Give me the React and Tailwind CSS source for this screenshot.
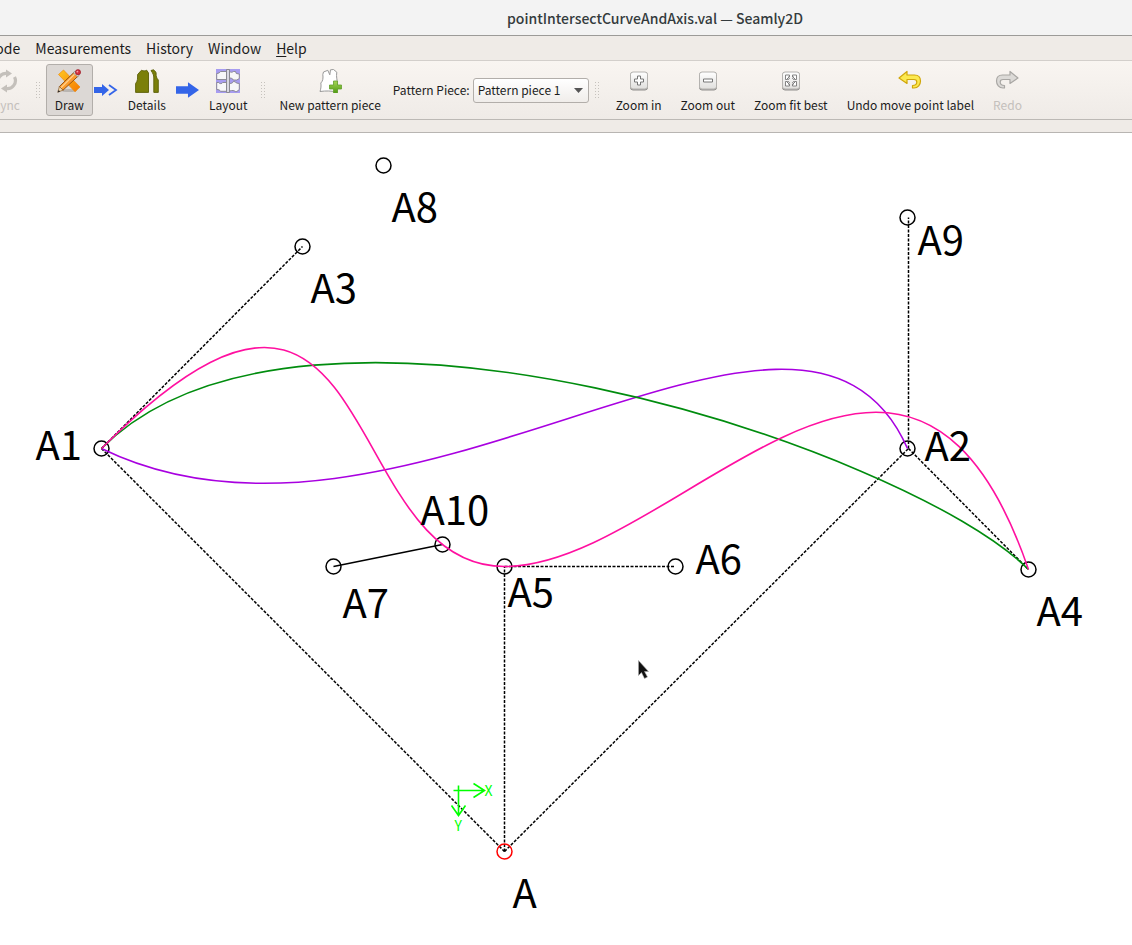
const menus = ['Mode', 'Measurements', 'History', 'Window'];

const lines = [
  [101, 448, 302, 246],
  [101, 448, 504, 851],
  [504, 851, 908, 448],
  [504, 851, 504, 566],
  [504, 566, 675, 566],
  [908, 448, 908, 217],
  [908, 448, 1028, 569],
];

const points = [
  { name: 'A', x: 504, y: 851, lx: 512, ly: 907 },
  { name: 'A1', x: 101, y: 448, lx: 35, ly: 459 },
  { name: 'A2', x: 907, y: 448, lx: 924, ly: 460 },
  { name: 'A3', x: 302, y: 246, lx: 310, ly: 302 },
  { name: 'A4', x: 1028, y: 569, lx: 1036, ly: 625 },
  { name: 'A5', x: 504, y: 566, lx: 507, ly: 606 },
  { name: 'A6', x: 675, y: 566, lx: 695, ly: 573 },
  { name: 'A7', x: 333, y: 566, lx: 342, ly: 617 },
  { name: 'A8', x: 383, y: 165, lx: 391, ly: 221 },
  { name: 'A9', x: 907, y: 217, lx: 917, ly: 254 },
  { name: 'A10', x: 442, y: 544, lx: 420, ly: 524 },
];

function SyncIcon() {
  return (
    <svg className="size-6" viewBox="0 0 24 24" fill="none" stroke="#c4c0bb" strokeWidth="3.200">
      <path d="M4.800 16A8 8 0 0 1 13 4.500M20.500 8A8 8 0 0 1 12 19.500" />
      <path d="M12 .5v8l6-4zM13 15.500v8l-6-4z" fill="#c4c0bb" stroke="none" />
    </svg>
  );
}

function DrawIcon() {
  return (
    <svg className="size-6" viewBox="0 0 24 24">
      <defs>
        <linearGradient id="ruler" x1="0" y1="0" x2="1" y2="1">
          <stop offset="0" stopColor="#ffc71f" />
          <stop offset="1" stopColor="#f57900" />
        </linearGradient>
      </defs>
      <ellipse cx="12" cy="21.500" rx="8" ry="1.600" fill="#b9b5b1" />
      <path d="M1.500 5.500 6.500 1 23 18l-5 4.800z" fill="url(#ruler)" stroke="#f08a0c" strokeWidth=".7" />
      <path d="M17.200 3.200 21.200 7 6 21.200 2.400 17.500z" fill="#fb9a2c" stroke="#8a4a0c" strokeWidth=".9" />
      <path d="M18.300 4.500 4 18.700" stroke="#ffd08a" strokeWidth="1.200" />
      <path d="M2.400 17.500 6 21.200 .8 23.200z" fill="#f1d9ae" stroke="#8a5a2c" strokeWidth=".7" />
      <path d="M1.700 21 .6 23.400l2.500-.9z" fill="#222" />
      <path d="m16.200 3.700 1.800-1.600 4.300 4-1.800 1.700z" fill="#d3d7cf" stroke="#777" strokeWidth=".5" />
      <circle cx="21" cy="3.200" r="2.600" fill="#d5303e" stroke="#8e1520" strokeWidth=".6" />
      <circle cx="20.400" cy="2.600" r=".9" fill="#f4a0a6" />
    </svg>
  );
}

function DetailsIcon() {
  return (
    <svg className="size-6" viewBox="0 0 24 24" fill="#7b7f0a" stroke="#5b5f08" strokeWidth=".9">
      <path d="M.6 23.400V14.500C2.800 12.200 2.600 9 2.600 5.500L6.500 1.200c2 .9 3.200.9 5.200 0L13.500 4v19.400z" />
      <path d="M16 1.500 18.500.8c1.200 1 2.300 1.600 2.600 3.200-.2 3.500.5 5 2.200 7v12.400h-4.500V9c0-3-.8-4.500-2.800-7.500z" />
    </svg>
  );
}

function LayoutIcon() {
  return (
    <svg className="size-6" viewBox="0 0 24 24">
      <rect width="24" height="24" fill="#a79cf0" />
      <g fill="#f7f7f9" stroke="#85838c" strokeWidth=".9">
        <path d="M.7 4.500C2.500 4.500 4 3.500 4.500 2.500h6v8H.7z" />
        <path d="M.7 13.500h2c.5 1.500 3.500 1.500 4 0h3.800v8.800H4.500C4 21 2.500 20.500.7 20.500z" />
        <path d="M13.500 2.500c1.500 1 2.500 1 4 0h2l.8 2 3 .5v4.500l-2.500 1.500h-3.500c-.5-1.500-2-2-3.800-2z" />
        <path d="M13.500 14.500c2 0 3.300-.5 3.800-2l2 .3 1 1.200 3 .5v6l-2.500 2h-1.500c-1-1-3-1.500-5.800-.5z" />
        <path d="M10.500.5h3v23h-3z" fill="#d9d8e2" />
      </g>
    </svg>
  );
}

function PieceIcon() {
  return (
    <svg className="size-6" viewBox="0 0 24 24">
      <defs>
        <linearGradient id="plus" x1="0" y1="0" x2="0" y2="1">
          <stop offset="0" stopColor="#a6d655" />
          <stop offset="1" stopColor="#4f9a12" />
        </linearGradient>
      </defs>
      <path d="M2 22.500c1-3 1.300-6 .8-8.500C5 12 5.300 9 4.800 5.500L5.500 3l4.300-1.700 2 4.500L12.500.8l3-.3 3.300 2.700c-.8 5 .5 7.500.5 10.500v9.500c-6-1.500-11-1.500-17.300-.7z" fill="#fff" stroke="#999" />
      <path d="M15.500 12h4v4h4v4h-4v4h-4v-4h-4v-4h4z" fill="url(#plus)" stroke="#62a02c" strokeWidth=".8" />
    </svg>
  );
}

function ZoomIcon({ kind }) {
  return (
    <svg className="size-6" viewBox="0 0 24 24" fill="none">
      <defs>
        <linearGradient id={'tile-' + kind} x1="0" y1="0" x2="0" y2="1">
          <stop offset="0" stopColor="#fff" />
          <stop offset="1" stopColor="#e0dfdd" />
        </linearGradient>
      </defs>
      <rect x="3.500" y="3.500" width="17" height="17.500" rx="2.500" fill="#aaa" stroke="#8f8d8b" />
      <rect x="3.500" y="3" width="17" height="17" rx="2.500" fill={'url(#tile-' + kind + ')'} stroke="#b4b2af" />
      <g stroke="#777" fill="#fff">
        {kind === 'in' && <path d="M10.500 7h3v3h3v3h-3v3h-3v-3h-3v-3h3z" />}
        {kind === 'out' && <path d="M7.500 10h9v3h-9z" />}
        {kind === 'fit' && (
          <path d="M6.500 6h4v2H9l1.500 1.500-1 1L8.500 9v1.500h-2zM17.500 6h-4v2H15l-1.500 1.500 1 1L15.500 9v1.500h2zM6.500 17h4v-2H9l1.500-1.500-1-1-1 1.500v-1.500h-2zM17.500 17h-4v-2H15l-1.500-1.500 1-1 1 1.500v-1.500h2z" strokeWidth=".9" />
        )}
      </g>
    </svg>
  );
}

const hook = 'M1 9 9 2.500V6h7.500c4 0 6 2.500 6 6s-2.500 7-6.500 7h-1.500v-2.500c3 0 4.300-1.500 4.300-3.500 0-1.700-1-2.500-2.800-2.500H9v4z';

function UndoIcon() {
  return (
    <svg className="size-6" viewBox="0 0 24 24">
      <path d={hook} fill="#fce94f" stroke="#d0a60a" strokeWidth="1.200" strokeLinejoin="round" />
    </svg>
  );
}

function RedoIcon() {
  return (
    <svg className="size-6" viewBox="0 0 24 24">
      <path d={hook} transform="matrix(-1 0 0 1 24 0)" fill="#dcdad7" stroke="#a9a7a4" strokeWidth="1.200" strokeLinejoin="round" />
    </svg>
  );
}

function Handle() {
  return (
    <svg className="h-[17px] w-[5px] shrink-0" viewBox="0 0 5 17" fill="#c6c2bd">
      {[0, 3, 6, 9, 12, 15].map((y) => (
        <g key={y}>
          <rect x="0" y={y} width="1" height="1" />
          <rect x="3" y={y} width="1" height="1" />
        </g>
      ))}
    </svg>
  );
}

function Tool({ icon, label, active, disabled }) {
  return (
    <button
      type="button"
      disabled={disabled}
      aria-pressed={active}
      className={
        'flex h-[52px] shrink-0 flex-col items-center gap-1 rounded-[3px] border px-2 pt-1 text-[12px] leading-4 whitespace-nowrap ' +
        (active ? 'border-[#b2aeaa] bg-[#dcd8d5] ' : 'border-transparent ') +
        (disabled ? 'text-[#c4c0bc]' : 'text-[#1c1c1c]')
      }
    >
      {icon}
      {label}
    </button>
  );
}

function Canvas() {
  return (
    <svg className="block h-auto w-full" viewBox="-.5 132.500 1132 812" fill="none" aria-label="Pattern draft">
      <g stroke="#000" strokeWidth="1.500" strokeDasharray="3 1.500">
        {lines.map(([x1, y1, x2, y2], i) => (
          <line key={i} x1={x1} y1={y1} x2={x2} y2={y2} />
        ))}
      </g>
      <path d="M333 566 442 544" stroke="#000" strokeWidth="1.500" />
      <g strokeWidth="1.500">
        {points.map((p) => (
          <circle key={p.name} cx={p.x} cy={p.y} r="7.500" stroke={p.name === 'A' ? '#f00' : '#000'} />
        ))}
      </g>
      <path d="M101 448C404 596 802 211 907 448" stroke="#a800e0" strokeWidth="1.600" />
      <path d="M101 448C302 246 907 448 1028 569" stroke="#008c0e" strokeWidth="1.600" />
      <path d="M101 448C383 165 333 566 504 566S907 217 1028 569" stroke="#ff10a0" strokeWidth="1.600" />
      <path d="M453 790H484M473 783 484 790 473 797M458 785V815M451 805 458 815 465 805" stroke="#0f0" strokeWidth="1.600" />
      <g fill="#0f0" fontSize="14">
        <text x="484" y="795">X</text>
        <text x="454" y="830">Y</text>
      </g>
      <g fill="#000" fontSize="40">
        {points.map((p) => (
          <text key={p.name} x={p.lx} y={p.ly}>{p.name}</text>
        ))}
      </g>
      <path d="M638 660v15l3-3 3 6 3-1.500-3-5.500h4z" fill="#111" stroke="#aaa" strokeWidth=".6" />
    </svg>
  );
}

export default function App() {
  return (
    <div className="flex min-h-screen flex-col overflow-hidden bg-white font-['Noto_Sans_CJK_SC','Noto_Sans',sans-serif] text-[#1c1c1c]">
      <header className="flex h-9 items-center justify-center border-b border-[#9c9b98] bg-[#f3f3f3] pl-[178px]">
        <h1 className="text-[14px] leading-5 font-medium whitespace-nowrap text-[#343b3d]">pointIntersectCurveAndAxis.val — Seamly2D</h1>
      </header>

      <nav className="-ml-4 flex h-[25px] items-center gap-[15px] border-b border-[#d3cfcb] bg-[#efebe7] text-[14px] leading-5">
        {menus.map((m) => (
          <button key={m} type="button">{m}</button>
        ))}
        <button type="button"><span className="underline underline-offset-2">H</span>elp</button>
      </nav>

      <div className="flex h-[59px] items-center gap-px overflow-hidden border-b border-[#bcb9b5] bg-gradient-to-b from-[#f9f5f1] to-[#efebe7]">
        <div className="-ml-4 flex"><Tool icon={<SyncIcon />} label="Sync" disabled /></div>
        <div className="flex w-[15px] justify-end pr-1"><Handle /></div>
        <Tool icon={<DrawIcon />} label="Draw" active />
        <svg className="h-3 w-6 shrink-0" viewBox="0 0 24 12" fill="#3465e8">
          <path d="M0 3h8V0l7 6-7 6V9H0z" />
          <path d="m15 1 7 5-7 5" fill="none" stroke="#3465e8" strokeWidth="1.800" />
        </svg>
        <Tool icon={<DetailsIcon />} label="Details" />
        <svg className="h-4 w-[23px] shrink-0" viewBox="0 0 24 16" fill="#3465e8">
          <path d="M0 4h12.500V0L24 8l-11.500 8v-4H0z" />
        </svg>
        <Tool icon={<LayoutIcon />} label="Layout" />
        <div className="flex w-3 justify-center"><Handle /></div>
        <Tool icon={<PieceIcon />} label="New pattern piece" />
        <label htmlFor="piece" className="mx-0.5 shrink-0 text-[12px] leading-4 whitespace-nowrap">Pattern Piece:</label>
        <div className="relative shrink-0">
          <select id="piece" className="block h-[25px] w-[116px] appearance-none rounded-[3px] border border-[#b2aeaa] bg-gradient-to-b from-white to-[#f0edea] px-1 text-[12px] leading-4">
            <option>Pattern piece 1</option>
          </select>
          <svg className="pointer-events-none absolute top-[10px] right-[6px] h-[5px] w-[9px]" viewBox="0 0 9 5" fill="#555">
            <path d="M0 0h9L4.500 5z" />
          </svg>
        </div>
        <div className="flex w-4 justify-center"><Handle /></div>
        <Tool icon={<ZoomIcon kind="in" />} label="Zoom in" />
        <Tool icon={<ZoomIcon kind="out" />} label="Zoom out" />
        <Tool icon={<ZoomIcon kind="fit" />} label="Zoom fit best" />
        <Tool icon={<UndoIcon />} label="Undo move point label" />
        <Tool icon={<RedoIcon />} label="Redo" disabled />
      </div>
      <div className="h-[13px] border-b border-[#b8b5b2] bg-[#efebe7]" />

      <main>
        <Canvas />
      </main>
    </div>
  );
}
